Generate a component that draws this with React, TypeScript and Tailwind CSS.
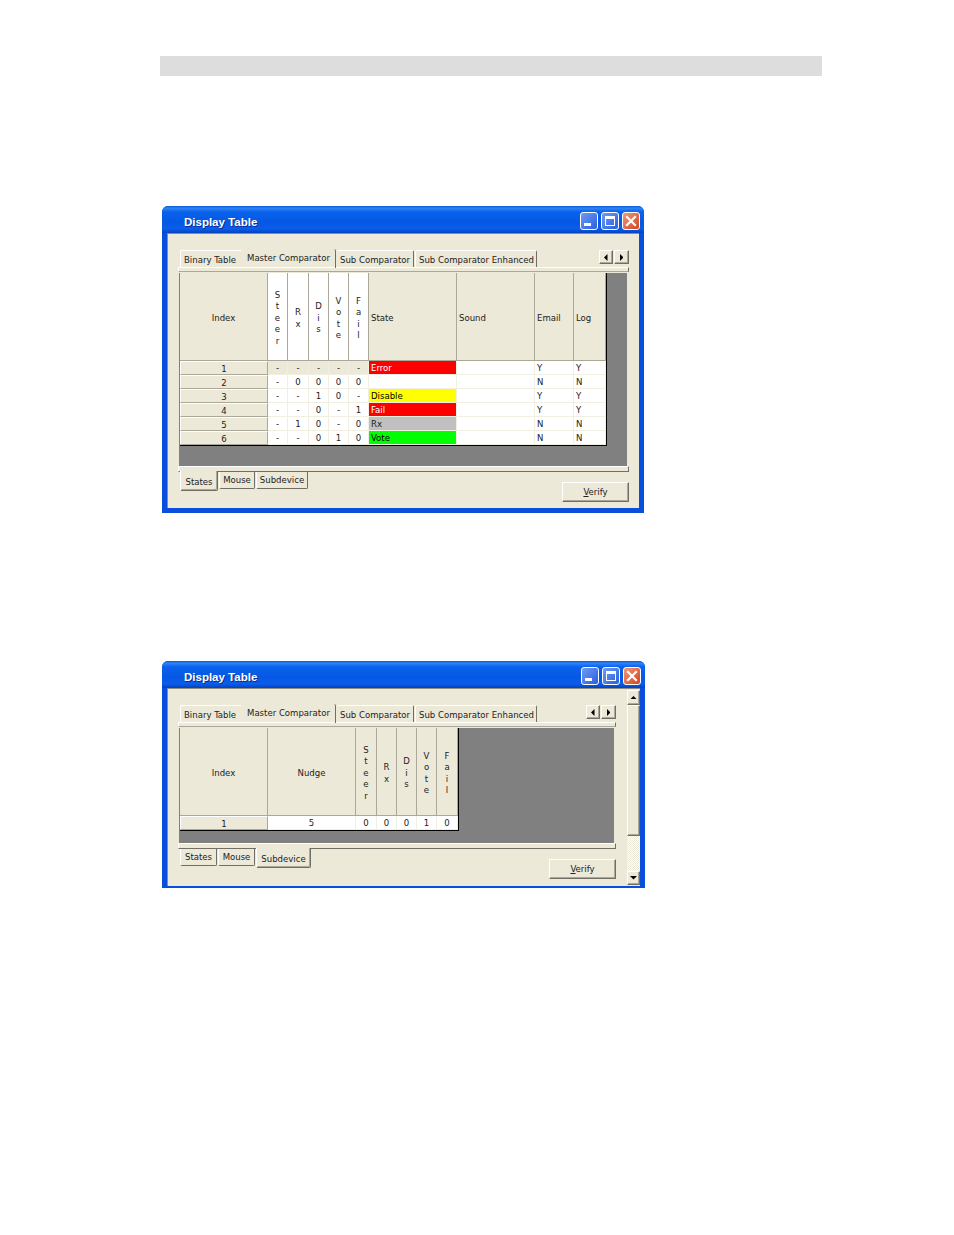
const RAISED =
  'border border-t-white border-l-white border-r-[#716f64] border-b-[#716f64] shadow-[inset_-1px_-1px_0_#aca899]'

const statesCols = [
  { label: 'Index', kind: 'wide' },
  { label: 'Steer', kind: 'vert' },
  { label: 'Rx', kind: 'vert' },
  { label: 'Dis', kind: 'vert' },
  { label: 'Vote', kind: 'vert' },
  { label: 'Fail', kind: 'vert' },
  { label: 'State', kind: 'left' },
  { label: 'Sound', kind: 'left' },
  { label: 'Email', kind: 'left' },
  { label: 'Log', kind: 'left' },
]

const statesRows = [
  { v: ['-', '-', '-', '-', '-'], state: 'Error', stateBg: 'bg-[#ff0000] text-white', email: 'Y', log: 'Y' },
  { v: ['-', '0', '0', '0', '0'], state: '', stateBg: 'bg-white', email: 'N', log: 'N' },
  { v: ['-', '-', '1', '0', '-'], state: 'Disable', stateBg: 'bg-[#ffff00] text-black', email: 'Y', log: 'Y' },
  { v: ['-', '-', '0', '-', '1'], state: 'Fail', stateBg: 'bg-[#ff0000] text-white', email: 'Y', log: 'Y' },
  { v: ['-', '1', '0', '-', '0'], state: 'Rx', stateBg: 'bg-[#c0c0c0]', email: 'N', log: 'N' },
  { v: ['-', '-', '0', '1', '0'], state: 'Vote', stateBg: 'bg-[#00ff00] text-black', email: 'N', log: 'N' },
]

const subdeviceCols = [
  { label: 'Index', kind: 'wide' },
  { label: 'Nudge', kind: 'wide' },
  { label: 'Steer', kind: 'vert' },
  { label: 'Rx', kind: 'vert' },
  { label: 'Dis', kind: 'vert' },
  { label: 'Vote', kind: 'vert' },
  { label: 'Fail', kind: 'vert' },
]

function Triangle({ dir, size = 5 }: { dir: 'left' | 'right' | 'up' | 'down'; size?: number }) {
  const points = {
    left: '4,0 4,8 0,4',
    right: '0,0 0,8 4,4',
    up: '0,4 8,4 4,0',
    down: '0,0 8,0 4,4',
  }[dir]
  const box = dir === 'left' || dir === 'right' ? '0 0 4 8' : '0 0 8 4'
  const w = dir === 'left' || dir === 'right' ? size / 2 + 1 : size + 2
  const h = dir === 'left' || dir === 'right' ? size + 2 : size / 2 + 1
  return (
    <svg width={w} height={h} viewBox={box}>
      <polygon points={points} fill="#000" />
    </svg>
  )
}

function TitleBar() {
  return (
    <div className="h-[27px] flex items-center justify-between pl-[22px] pr-[4px] rounded-t-[6px] bg-[linear-gradient(180deg,#0a5ad8_0%,#2f83f5_8%,#0a62ec_22%,#0558e4_60%,#0a5cea_85%,#0342bd_100%)]">
      <span className="text-[11.5px] font-bold text-white [text-shadow:1px_1px_0_#0a2f90] pt-[6px] font-['Liberation_Sans',Arial,sans-serif] [font-stretch:normal]">
        Display Table
      </span>
      <div className="flex gap-[3px] mt-[3px]">
        <div className="w-[18px] h-[18px] rounded-[3px] border border-white bg-[linear-gradient(135deg,#6f9bf3,#2a5fe0)] flex items-end pl-[3px] pb-[3px]">
          <div className="w-[7px] h-[3px] bg-white" />
        </div>
        <div className="w-[18px] h-[18px] rounded-[3px] border border-white bg-[linear-gradient(135deg,#6f9bf3,#2a5fe0)] p-[3px]">
          <div className="w-full h-full border border-white border-t-[3px]" />
        </div>
        <div className="w-[18px] h-[18px] rounded-[3px] border border-white bg-[linear-gradient(135deg,#ef9a7c,#d5441c)] flex items-center justify-center">
          <svg width="12" height="12" viewBox="0 0 12 12">
            <path d="M2 2 L10 10 M10 2 L2 10" stroke="#fff" strokeWidth="2.2" strokeLinecap="square" />
          </svg>
        </div>
      </div>
    </div>
  )
}

function TopTabs() {
  const tab =
    'h-[17px] mt-[1px] pt-[2px] flex items-center whitespace-nowrap border-t border-l border-white rounded-t-[2px] border-r border-r-[#716f64]'
  return (
    <div className="h-[18px] flex items-start justify-between pl-[2px]">
      <div className="flex">
        <div className={`${tab} w-[62px] pl-[3px] border-r-[#ece9d8]`}>Binary Table</div>
        <div className="h-[19px] w-[94px] pl-[5px] pb-[1px] flex items-center whitespace-nowrap border-r border-r-[#716f64] rounded-t-[2px] relative z-10">
          Master Comparator
        </div>
        <div className={`${tab} w-[77px] pl-[3px] ml-[1px] border-l-0`}>Sub Comparator</div>
        <div className={`${tab} w-[122px] pl-[3px] ml-[1px]`}>Sub Comparator Enhanced</div>
      </div>
      <div className="flex gap-[1px] mt-[1px]">
        <div className={`${RAISED} w-[14px] h-[14px] flex items-center justify-center`}>
          <Triangle dir="left" />
        </div>
        <div className={`${RAISED} w-[15px] h-[14px] flex items-center justify-center`}>
          <Triangle dir="right" />
        </div>
      </div>
    </div>
  )
}

function HeaderCell({ label, kind, vertBg = 'bg-[#ece9d8]' }: { label: string; kind: string; vertBg?: string }) {
  const base = 'h-[88px] pt-[2px] border-r border-b border-[#aca899] flex items-center'
  if (kind === 'vert') {
    return (
      <div className={`${base} flex-col justify-center leading-[11.5px] ${vertBg}`}>
        {label.split('').map((letter, i) => (
          <span key={i}>{letter}</span>
        ))}
      </div>
    )
  }
  if (kind === 'left') return <div className={`${base} pl-[2px] bg-[#ece9d8]`}>{label}</div>
  return <div className={`${base} justify-center bg-[#ece9d8]`}>{label}</div>
}

function IndexCell({ value }: { value: number }) {
  return (
    <div className="h-[14px] pt-[1px] flex items-center justify-center bg-[#ece9d8] border-t border-l border-white border-r border-b border-r-[#aca899] border-b-[#aca899]">
      {value}
    </div>
  )
}

function DataCell({ value, sand = false, center = true }: { value: string; sand?: boolean; center?: boolean }) {
  return (
    <div
      className={`h-[14px] pt-[1px] flex items-center border-r border-b border-[#f1efe2] ${sand ? 'bg-[#ece9d8]' : 'bg-white'} ${
        center ? 'justify-center' : 'pl-[2px]'
      }`}
    >
      {value}
    </div>
  )
}

function StatesGrid() {
  return (
    <div className="w-[427px] mt-[1px] ml-[1px] grid grid-cols-[88px_20px_21px_20px_20px_20px_88px_78px_39px_32px] border-r border-b border-black">
      {statesCols.map((col) => (
        <HeaderCell key={col.label} label={col.label} kind={col.kind} vertBg="bg-white" />
      ))}
      {statesRows.map((row, i) => (
        <div key={i} className="contents">
          <IndexCell value={i + 1} />
          {row.v.map((value, j) => (
            <DataCell key={j} value={value} sand={i === 0} />
          ))}
          <div className={`h-[14px] pt-[1px] flex items-center pl-[2px] border-b border-r border-[#f1efe2] ${row.stateBg}`}>{row.state}</div>
          <DataCell value="" />
          <DataCell value={row.email} center={false} />
          <DataCell value={row.log} center={false} />
        </div>
      ))}
    </div>
  )
}

function SubdeviceGrid() {
  const values = ['5', '0', '0', '0', '1', '0']
  return (
    <div className="w-[279px] mt-[1px] ml-[1px] grid grid-cols-[88px_88px_21px_20px_20px_20px_21px] border-r border-b border-black">
      {subdeviceCols.map((col) => (
        <HeaderCell key={col.label} label={col.label} kind={col.kind} />
      ))}
      <IndexCell value={1} />
      {values.map((value, i) => (
        <DataCell key={i} value={value} />
      ))}
    </div>
  )
}

function BottomTabs({ active }: { active: string }) {
  const onStates = active === 'States'
  const items = [
    { label: 'States', w: onStates ? 'w-[38px] mr-[1px]' : 'w-[37px]' },
    { label: 'Mouse', w: onStates ? 'w-[36px]' : 'w-[37px]' },
    { label: 'Subdevice', w: onStates ? 'w-[52px]' : 'w-[55px]' },
  ]
  return (
    <div className="flex items-start pl-[2px]">
      {items.map((item) =>
        item.label === active ? (
          <div
            key={item.label}
            className={`${item.w} h-[20px] -mt-[1px] relative z-10 flex items-center justify-center pt-[2px] bg-[#ece9d8] border-l border-l-white border-r border-b border-r-[#716f64] border-b-[#716f64] rounded-b-[2px] shadow-[inset_-1px_-1px_0_#aca899]`}
          >
            {item.label}
          </div>
        ) : (
          <div
            key={item.label}
            className={`${item.w} h-[17px] mr-[1px] flex items-center justify-center border-l border-l-white border-r border-b border-r-[#716f64] border-b-[#716f64] rounded-b-[2px]`}
          >
            {item.label}
          </div>
        )
      )}
    </div>
  )
}

function Scrollbar() {
  return (
    <div className="w-[13px] ml-[11px] mt-[1px] flex flex-col">
      <div className={`${RAISED} h-[15px] flex items-center justify-center`}>
        <Triangle dir="up" />
      </div>
      <div className={`${RAISED} h-[131px]`} />
      <div className="h-[35px] bg-[repeating-conic-gradient(#ece9d8_0_25%,#ffffff_0_50%)] bg-[length:2px_2px]" />
      <div className={`${RAISED} h-[14px] flex items-center justify-center`}>
        <Triangle dir="down" />
      </div>
    </div>
  )
}

function DisplayWindow({
  width,
  height,
  bottomBorder,
  workspaceH,
  active,
  scrollbar = false,
  children,
}: {
  width: string
  height: string
  bottomBorder: string
  workspaceH: string
  active: string
  scrollbar?: boolean
  children: React.ReactNode
}) {
  return (
    <div className={`${width} ${height} flex flex-col bg-[#0a4fdc] rounded-t-[6px]`}>
      <TitleBar />
      <div className={`flex-1 mx-[5px] ${bottomBorder} flex bg-[#ece9d8] border-t border-l border-t-[#8f8d80] border-l-[#8f8d80]`}>
        <div className="flex-1 min-w-0 pl-[10px] pt-[15px]">
          <TopTabs />
          <div className="h-[5px] border-t border-l border-t-white border-l-white border-r border-r-[#716f64] border-b border-b-[#aca899]" />
          <div className={`${workspaceH} ml-[1px] mr-[2px] bg-[#808080]`}>{children}</div>
          <div className="h-[6px] border-t border-t-white border-l border-l-white border-r border-r-[#716f64] border-b border-b-[#716f64]" />
          <div className="flex justify-between items-start">
            <BottomTabs active={active} />
            <button className={`${RAISED} w-[67px] h-[20px] mt-[10px] text-center`}>
              <span className="underline">V</span>erify
            </button>
          </div>
        </div>
        {scrollbar ? <Scrollbar /> : <div className="w-[10px]" />}
      </div>
    </div>
  )
}

export default function App() {
  return (
    <div className="w-[954px] h-[1235px] bg-white pt-[56px] pl-[160px] text-[9.5px] leading-none text-[#222] [font-stretch:condensed] font-['DejaVu_Sans_Condensed','DejaVu_Sans',sans-serif]">
      <div className="w-[662px] h-[20px] bg-[#dddddd]" />
      <div className="ml-[2px] mt-[130px]">
        <DisplayWindow width="w-[482px]" height="h-[307px]" bottomBorder="mb-[5px]" workspaceH="h-[193px]" active="States">
          <StatesGrid />
        </DisplayWindow>
      </div>
      <div className="ml-[2px] mt-[148px]">
        <DisplayWindow
          width="w-[483px]"
          height="h-[227px]"
          bottomBorder="mb-[2px]"
          workspaceH="h-[115px]"
          active="Subdevice"
          scrollbar
        >
          <SubdeviceGrid />
        </DisplayWindow>
      </div>
    </div>
  )
}
